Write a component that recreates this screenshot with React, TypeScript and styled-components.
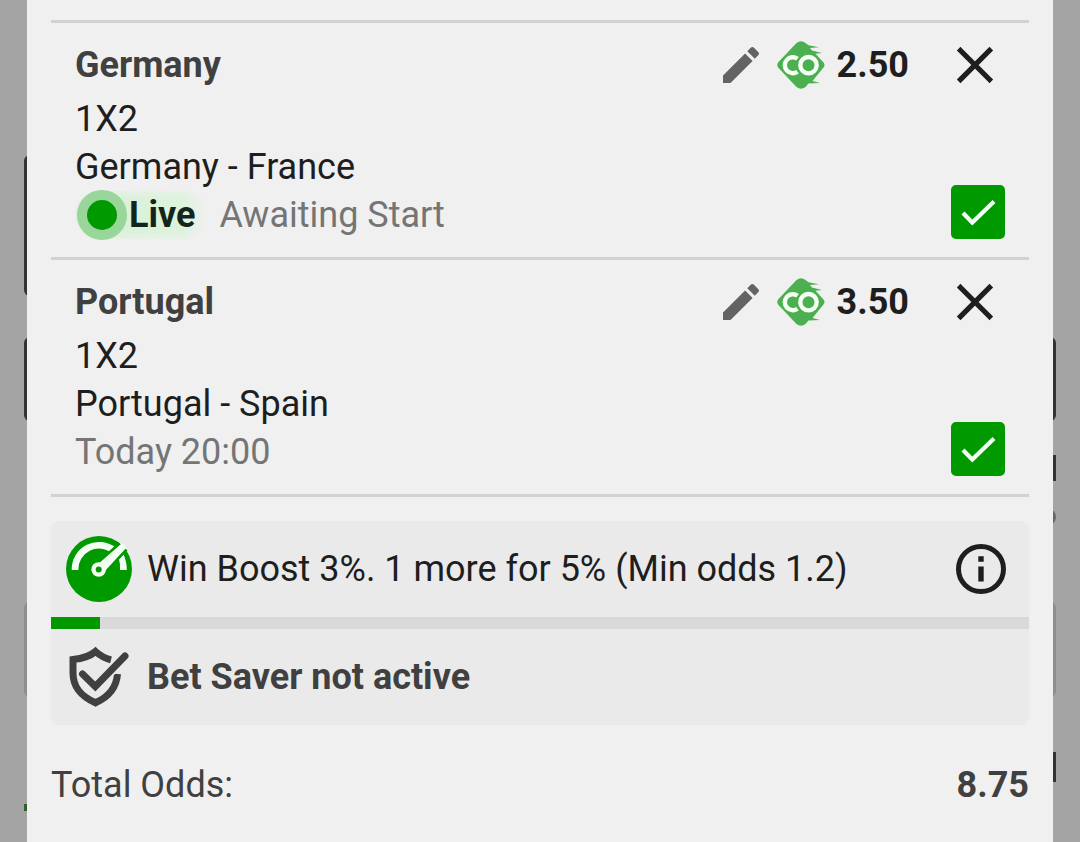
import React from 'react';
import styled, { createGlobalStyle } from 'styled-components';

const GlobalStyle = createGlobalStyle`
  *, *::before, *::after { box-sizing: border-box; }
  body {
    margin: 0;
    background: #a4a4a4;
    font-family: Roboto, "Liberation Sans", sans-serif;
    font-size: 36px;
    line-height: 48px;
    color: #1e1e1e;
  }
`;

const Page = styled.div`
  position: relative;
  min-height: 100vh;
  padding: 0 27px;
  overflow: hidden;
`;

/* Cards of the page that lies dimmed behind the bet slip. */
const BackCard = styled.div<{ $top: number; $height: number; $side?: 'left' | 'right'; $color?: string; $radius?: number }>`
  position: absolute;
  top: ${p => p.$top}px;
  height: ${p => p.$height}px;
  left: ${p => (p.$side === 'right' ? '50%' : '24px')};
  right: ${p => (p.$side === 'left' ? '50%' : '24px')};
  border-radius: ${p => p.$radius ?? 0}px;
  background: ${p => p.$color ?? '#333333'};
`;

const Slip = styled.main`
  position: relative;
  min-height: 100vh;
  padding: 20px 24px 32px;
  background: #f0f0f0;
`;

const Selections = styled.ul`
  list-style: none;
  margin: 0 0 24px;
  padding: 0;
  border-bottom: 3px solid #d2d2d2;
`;

const Selection = styled.li`
  padding: 18px 24px;
  border-top: 3px solid #d2d2d2;
`;

const SelectionHeader = styled.div`
  display: flex;
  align-items: center;
  height: 48px;
  margin-bottom: 6px;
`;

const Pick = styled.h2`
  flex: 1;
  margin: 0;
  font-size: 36px;
  font-weight: 700;
  color: #404040;
`;

const IconButton = styled.button`
  display: flex;
  align-items: center;
  justify-content: center;
  flex: none;
  padding: 0;
  border: 0;
  background: none;
  color: inherit;
  cursor: pointer;
`;

const EditButton = styled(IconButton)`
  margin-right: 12px;
  color: #636363;
`;

const RemoveButton = styled(IconButton)`
  margin-left: 42px;
  margin-right: 6px;
`;

const Odds = styled.span`
  margin-left: 12px;
  font-weight: 700;
`;

const SelectionBody = styled.div`
  display: flex;
  align-items: flex-end;
  justify-content: space-between;
`;

const Line = styled.div<{ $muted?: boolean }>`
  display: flex;
  align-items: center;
  height: 48px;
  color: ${p => (p.$muted ? '#757575' : 'inherit')};
`;

const Live = styled.span`
  display: flex;
  align-items: center;
  height: 48px;
  margin-right: 10px;
  padding-right: 14px;
  border-radius: 24px;
  background: linear-gradient(90deg, #d9f0d9 30%, #dcf3dc 80%, #f0f0f0);
  box-shadow: inset 0 0 8px 2px #f0f0f0;
  color: #14241a;
  font-weight: 700;
`;

const LiveDot = styled.span`
  width: 50px;
  height: 50px;
  margin: 0 2px;
  border: 10px solid #99d699;
  border-radius: 50%;
  background: #009900;
`;

const CheckLabel = styled.label`
  display: grid;
  flex: none;
  width: 54px;
  height: 54px;
  cursor: pointer;

  > * { grid-area: 1 / 1; }
  svg { visibility: hidden; pointer-events: none; }
  input:checked + svg { visibility: visible; }
`;

const CheckInput = styled.input`
  appearance: none;
  width: 54px;
  height: 54px;
  margin: 0;
  border: 3px solid #009900;
  border-radius: 5px;
  cursor: pointer;

  &:checked { background: #009900; }
`;

const Offers = styled.section`
  border-radius: 8px;
  background: #eaeaea;
`;

const OfferRow = styled.div`
  display: flex;
  align-items: center;
  gap: 15px;
  height: 96px;
  padding: 0 23px 0 15px;
`;

const OfferText = styled.span<{ $bold?: boolean }>`
  flex: 1;
  font-weight: ${p => (p.$bold ? 700 : 400)};
  color: ${p => (p.$bold ? '#404040' : 'inherit')};
`;

const Track = styled.div`
  height: 12px;
  background: #d9d9d9;
`;

const Fill = styled.div`
  height: 100%;
  background: #009900;
`;

const Total = styled.div`
  display: flex;
  justify-content: space-between;
  margin-top: 36px;
  color: #404040;
`;

const PencilIcon = () => (
  <svg width="48" height="48" viewBox="0 0 24 24" fill="currentColor" aria-hidden="true">
    <path d="M3 17.25V21h3.75L17.81 9.94l-3.75-3.75L3 17.25zM20.71 7.04a1 1 0 0 0 0-1.41l-2.34-2.34a1 1 0 0 0-1.41 0l-1.83 1.83 3.75 3.75 1.83-1.83z" />
  </svg>
);

const CrossIcon = () => (
  <svg width="48" height="48" viewBox="0 0 48 48" fill="none" stroke="currentColor" strokeWidth="5.2" aria-hidden="true">
    <path d="M9.500 9.500 38.500 38.500M38.500 9.500 9.500 38.500" strokeLinecap="square" strokeLinejoin="round" />
  </svg>
);

const CutOneIcon = () => (
  <svg width="48" height="48" viewBox="0 0 48 48" role="img" aria-label="Cut one">
    <path
      fill="#4caf50"
      d="M19.500 2Q24-1.500 28.500 2L31.500 4.300 42 6.200 33 7 35 9.500 45 12 38.500 12.800 46.500 21.500Q48.500 24 46.500 26.500L37.500 37.500 35.500 40 43 42 31.500 42.500 28.500 46Q24 49.500 19.500 46L1.500 27Q-1 24 1.500 21Z"
    />
    <g fill="none" stroke="#f6fff4" strokeWidth="4.400">
      <path d="M20.500 17.700A8 8 0 1 0 20.500 30.700" />
      <circle cx="31.500" cy="24.200" r="11.600" fill="#4caf50" stroke="none" />
      <circle cx="31.500" cy="24.200" r="8.200" />
    </g>
  </svg>
);

const CheckIcon = () => (
  <svg width="54" height="54" viewBox="0 0 54 54" fill="none" stroke="#f2fff2" strokeWidth="4.200" aria-hidden="true">
    <path d="M12 28 21.300 37.500 43 16.500" />
  </svg>
);

const GaugeIcon = () => (
  <svg width="66" height="66" viewBox="0 0 66 66" aria-hidden="true">
    <circle cx="33" cy="33" r="33" fill="#009900" />
    <path d="M9 34A24 24 0 0 1 48 14.500" fill="none" stroke="#f4fff4" strokeWidth="6.600" />
    <path d="M53 23.500 57.500 18.500Q60.800 25.500 60.800 34H54Q54.500 28 53 23.500Z" fill="#f4fff4" />
    <path d="M30 27 52.500 6.500 61.500 14.500 39.500 37Z" fill="#009900" />
    <path d="M54.500 8.500 58 3 65 10 59.500 13Z" fill="#eaeaea" />
    <path d="M31 29 54.500 8.500 57 8 59.500 10.500 59.200 13 38 36Z" fill="#f4fff4" />
    <circle cx="32.700" cy="33.500" r="7.300" fill="#f4fff4" />
    <circle cx="32.700" cy="33.500" r="3" fill="#009900" />
  </svg>
);

const ShieldIcon = () => (
  <svg width="66" height="66" viewBox="0 0 66 66" fill="none" stroke="#404040" strokeWidth="7" aria-hidden="true">
    <path d="M45 15.800Q36 13.500 29.500 7.500 22 14 7 15.600V29C7 43 14.500 52 29.500 58.800 43.500 52.500 50.500 43 51.500 30" />
    <path d="M16 30.500 29 43.500 59 12" stroke="#eaeaea" strokeWidth="10.500" />
    <path d="M16.500 30 29.300 42.500 59 12" strokeLinecap="round" />
  </svg>
);

const InfoIcon = () => (
  <svg width="50" height="50" viewBox="0 0 50 50" aria-hidden="true">
    <circle cx="25" cy="25" r="22.500" fill="none" stroke="currentColor" strokeWidth="5" />
    <path d="M22.300 12.300h5.400v5.400h-5.400zM22.300 22.500h5.400v15h-5.400z" fill="currentColor" />
  </svg>
);

type Bet = { pick: string; market: string; match: string; odds: string; live?: boolean; status: string };

const bets: Bet[] = [
  { pick: 'Germany', market: '1X2', match: 'Germany - France', odds: '2.50', live: true, status: 'Awaiting Start' },
  { pick: 'Portugal', market: '1X2', match: 'Portugal - Spain', odds: '3.50', status: 'Today 20:00' },
];

const BetSelection = ({ bet }: { bet: Bet }) => (
  <Selection>
    <SelectionHeader>
      <Pick>{bet.pick}</Pick>
      <EditButton type="button" aria-label={`Edit ${bet.pick}`}><PencilIcon /></EditButton>
      <CutOneIcon />
      <Odds>{bet.odds}</Odds>
      <RemoveButton type="button" aria-label={`Remove ${bet.pick}`}><CrossIcon /></RemoveButton>
    </SelectionHeader>
    <SelectionBody>
      <div>
        <Line>{bet.market}</Line>
        <Line>{bet.match}</Line>
        <Line $muted>
          {bet.live && <Live><LiveDot />Live</Live>}
          <span>{bet.status}</span>
        </Line>
      </div>
      <CheckLabel>
        <CheckInput type="checkbox" defaultChecked aria-label={`Include ${bet.pick}`} />
        <CheckIcon />
      </CheckLabel>
    </SelectionBody>
  </Selection>
);

export default function App() {
  return (
    <Page>
      <GlobalStyle />
      <BackCard $top={155} $height={141} $side="left" $radius={6} />
      <BackCard $top={337} $height={84} $radius={6} />
      <BackCard $top={455} $height={26} $side="right" />
      <BackCard $top={509} $height={16} $side="right" $radius={8} $color="#6e6262" />
      <BackCard $top={602} $height={95} $radius={6} $color="#8e8e8e" />
      <BackCard $top={752} $height={30} $side="right" />
      <BackCard $top={804} $height={7} $side="left" $color="#2f5f2f" />
      <Slip>
        <Selections>
          {bets.map(bet => <BetSelection key={bet.pick} bet={bet} />)}
        </Selections>
        <Offers>
          <OfferRow>
            <GaugeIcon />
            <OfferText>Win Boost 3%. 1 more for 5% (Min odds 1.2)</OfferText>
            <IconButton type="button" aria-label="About Win Boost"><InfoIcon /></IconButton>
          </OfferRow>
          <Track role="progressbar" aria-label="Win Boost" aria-valuenow={5} aria-valuemin={0} aria-valuemax={100}>
            <Fill style={{ width: '5%' }} />
          </Track>
          <OfferRow>
            <ShieldIcon />
            <OfferText $bold>Bet Saver not active</OfferText>
          </OfferRow>
        </Offers>
        <Total>
          <span>Total Odds:</span>
          <strong>8.75</strong>
        </Total>
      </Slip>
    </Page>
  );
}
